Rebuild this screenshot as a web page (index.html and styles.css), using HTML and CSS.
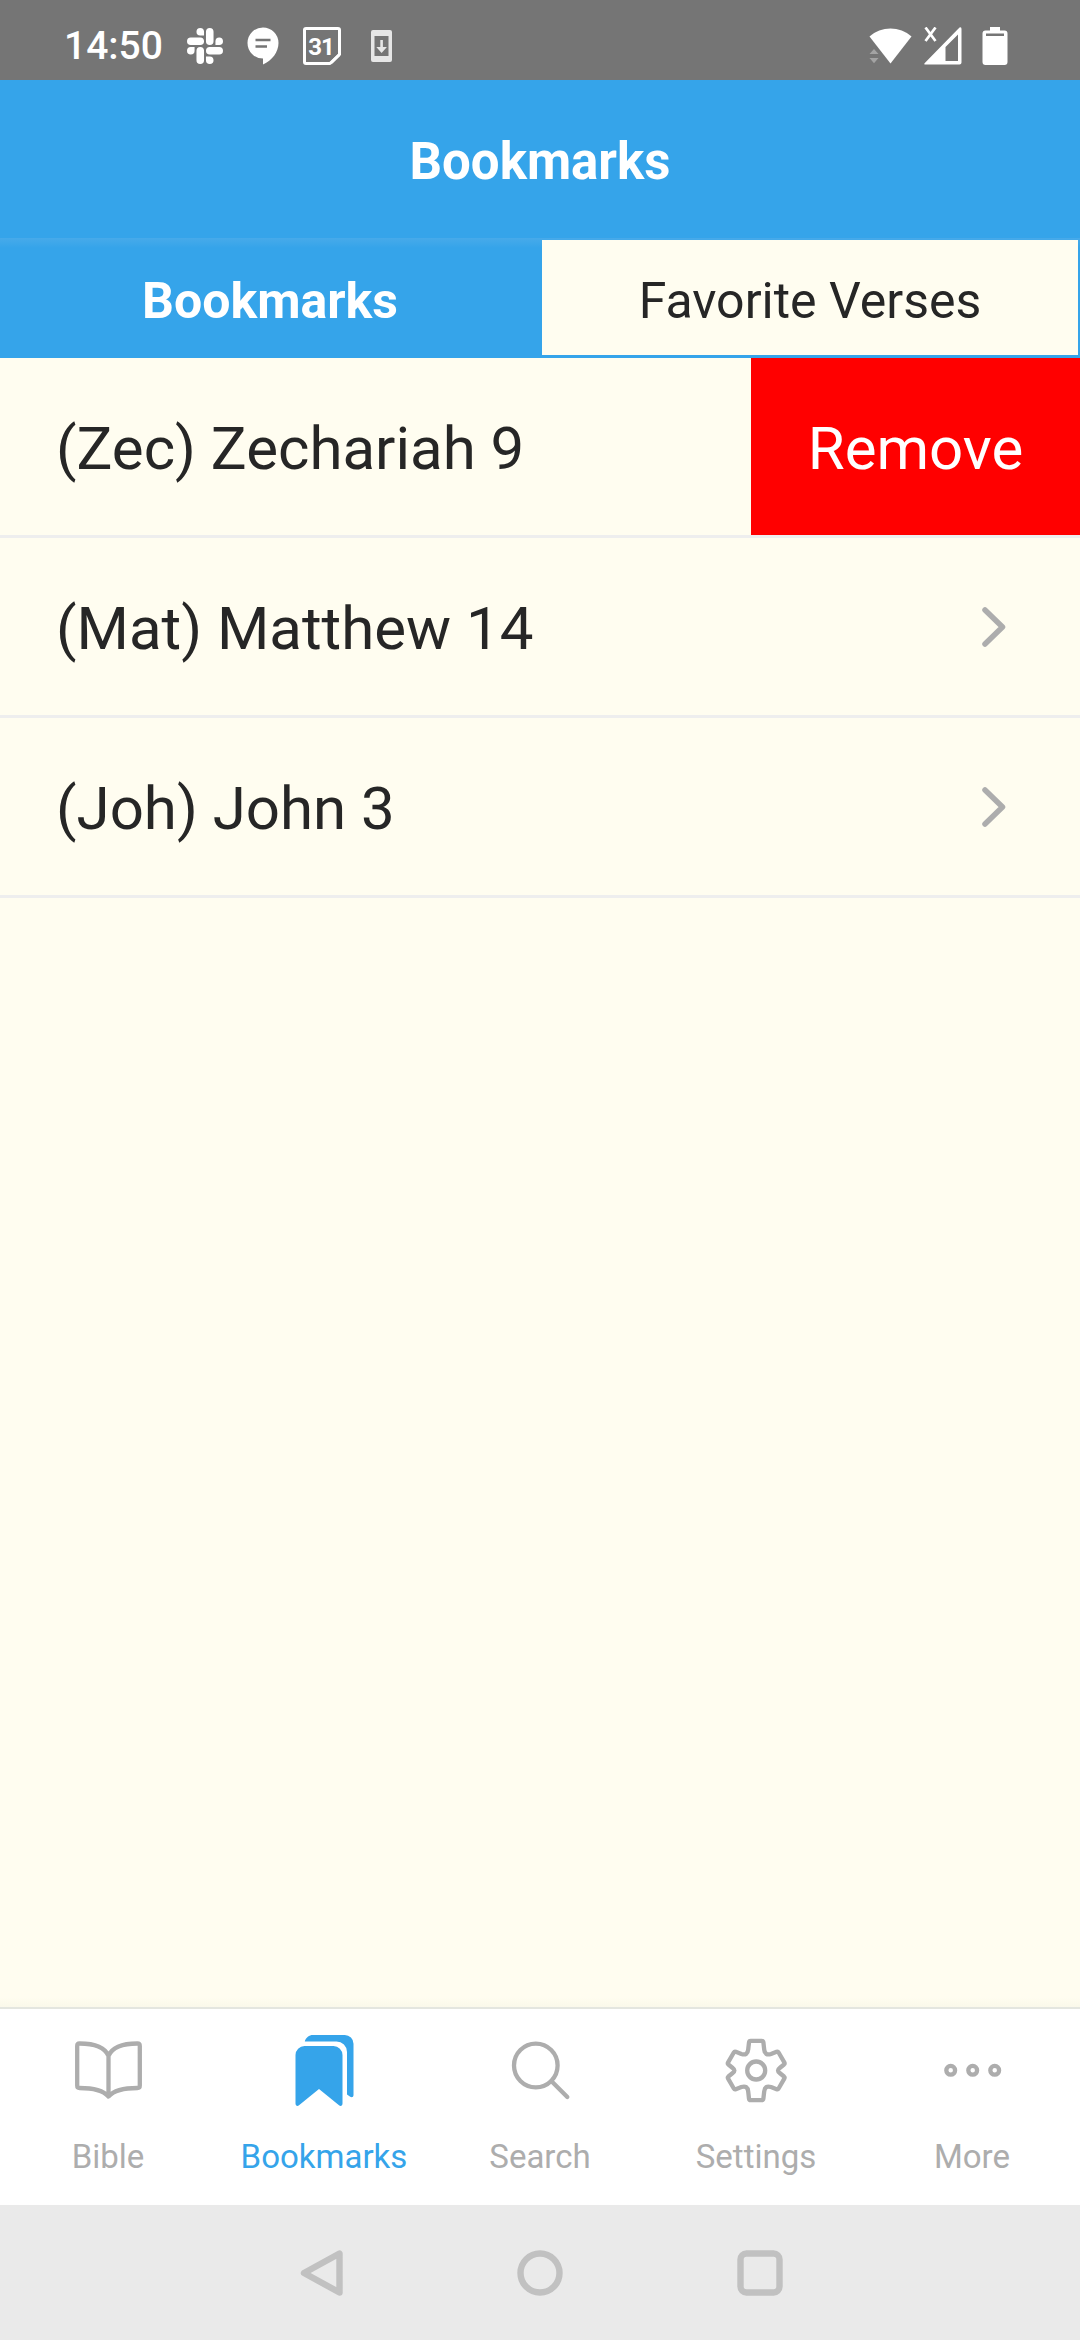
FILE: index.html
```html
<!DOCTYPE html>
<html lang="en">
<head>
  <meta charset="UTF-8">
  <meta name="viewport" content="width=device-width, initial-scale=1.0">
  <title>Bookmarks</title>
  <link rel="stylesheet" href="styles.css">
</head>
<body>
  <div class="status-bar">
    <span class="time">14:50</span>
    <svg class="slack" viewBox="0 0 24 24" width="36" height="36" fill="#fff"><path d="M5.042 15.165a2.528 2.528 0 0 1-2.52 2.523A2.528 2.528 0 0 1 0 15.165a2.527 2.527 0 0 1 2.522-2.52h2.52v2.52zM6.313 15.165a2.527 2.527 0 0 1 2.521-2.52 2.527 2.527 0 0 1 2.521 2.52v6.313A2.528 2.528 0 0 1 8.834 24a2.528 2.528 0 0 1-2.521-2.522v-6.313zM8.834 5.042a2.528 2.528 0 0 1-2.521-2.52A2.528 2.528 0 0 1 8.834 0a2.528 2.528 0 0 1 2.521 2.522v2.52H8.834zM8.834 6.313a2.528 2.528 0 0 1 2.521 2.521 2.528 2.528 0 0 1-2.521 2.521H2.522A2.528 2.528 0 0 1 0 8.834a2.528 2.528 0 0 1 2.522-2.521h6.312zM18.956 8.834a2.528 2.528 0 0 1 2.522-2.521A2.528 2.528 0 0 1 24 8.834a2.528 2.528 0 0 1-2.522 2.521h-2.522V8.834zM17.688 8.834a2.528 2.528 0 0 1-2.523 2.521 2.527 2.527 0 0 1-2.520-2.521V2.522A2.527 2.527 0 0 1 15.165 0a2.528 2.528 0 0 1 2.523 2.522v6.312zM15.165 18.956a2.528 2.528 0 0 1 2.523 2.522A2.528 2.528 0 0 1 15.165 24a2.527 2.527 0 0 1-2.520-2.522v-2.522h2.520zM15.165 17.688a2.527 2.527 0 0 1-2.520-2.523 2.526 2.526 0 0 1 2.520-2.520h6.313A2.527 2.527 0 0 1 24 15.165a2.528 2.528 0 0 1-2.522 2.523h-6.313z"/></svg>
    <svg class="chat" width="32" height="38" viewBox="0 0 32 38">
      <path fill="#fff" d="M16 .5a15.5 15.5 0 0 1 15.5 15.5C31.500 25 25 33.500 16 37.500V31.500A15.500 15.500 0 0 1 16 .5z"/>
      <path stroke="#757575" stroke-width="2.600" d="M8.500 13h15M8.500 19.500h11.500"/>
    </svg>
    <svg class="calendar" width="40" height="40" viewBox="0 0 40 40">
      <path fill="none" stroke="#fff" stroke-width="3" stroke-linejoin="round" d="M4 2.500h32a1.500 1.500 0 0 1 1.500 1.500v24.500L28 37.500H4A1.500 1.500 0 0 1 2.500 36V4A1.500 1.500 0 0 1 4 2.500z"/>
      <path fill="#fff" d="M26.500 37.500L37.500 26.500v4l-7 7z"/>
      <text class="calendar-day" x="19" y="28.500" text-anchor="middle">31</text>
    </svg>
    <svg class="update" width="21" height="32" viewBox="0 0 21 32">
      <path fill="#e6e6e6" fill-rule="evenodd" d="M2 0h17a2 2 0 0 1 2 2v28a2 2 0 0 1-2 2H2a2 2 0 0 1-2-2V2a2 2 0 0 1 2-2zM3.500 6v20h14V6z"/>
      <path fill="#e6e6e6" d="M9.300 10h2.600v7h4l-5.300 6-5.300-6h4z"/>
    </svg>
    <svg class="wifi" width="43" height="36" viewBox="0 0 43 36">
      <path fill="#fff" d="M.5 8.500C12-2.300 31-2.300 42.500 8.500L21.500 35.500z"/>
      <path fill="#a3a3a3" d="M.5 26l4.500-5 4.500 5zM.5 30l4.500 5.200 4.500-5.200z"/>
    </svg>
    <svg class="signal" width="38" height="38" viewBox="0 0 38 38">
      <path fill="#fff" fill-rule="evenodd" d="M35.500.6Q37.500-.5 37.500 2v33.500q0 2-2 2H1.500Q-.5 37.500.8 36zM34 7.500L21.500 20v14H34z"/>
      <path stroke="#fff" stroke-width="2.700" d="M1.500.5l10 13.500M11.500.5l-10 13.500"/>
    </svg>
    <svg class="battery" width="26" height="38" viewBox="0 0 26 38">
      <path fill="#fff" d="M8 0h10v3.500h4.500a3 3 0 0 1 3 3V35a3 3 0 0 1-3 3h-19a3 3 0 0 1-3-3V6.500a3 3 0 0 1 3-3H8z"/>
      <path fill="#757575" d="M4 6.500h18V9H4z"/>
    </svg>
  </div>

  <header class="header">Bookmarks</header>

  <div class="tabs">
    <div class="tab active">Bookmarks</div>
    <div class="tab">Favorite Verses</div>
  </div>

  <ul class="list">
    <li class="item swiped">
      <span class="verse">(Zec) Zechariah 9</span>
      <button class="remove">Remove</button>
    </li>
    <li class="item">
      <span class="verse">(Mat) Matthew 14</span>
      <svg class="chevron" width="26" height="42" viewBox="0 0 26 42"><path d="M4 4l17.500 17L4 38"/></svg>
    </li>
    <li class="item">
      <span class="verse">(Joh) John 3</span>
      <svg class="chevron" width="26" height="42" viewBox="0 0 26 42"><path d="M4 4l17.500 17L4 38"/></svg>
    </li>
  </ul>

  <nav class="tab-bar">
    <a class="nav-item">
      <svg class="icon" width="80" height="80" viewBox="0 0 80 80">
        <path d="M40.500 26C36 15 22 13.500 11.500 13.500Q9.200 13.500 9.200 16V55.500Q9.200 58 11.500 58C22 58 34 59 40.500 66.500C47 59 59 58 69.500 58Q71.800 58 71.800 55.500V16Q71.800 13.500 69.500 13.500C59 13.500 45 15 40.500 26zV65"/>
      </svg>
      Bible
    </a>
    <a class="nav-item current">
      <svg class="icon solid" width="80" height="80" viewBox="7.8 0 80 80">
        <path d="M19.300 25a9 9 0 0 1 9-9h29a9 9 0 0 1 9 9v48.500c0 2.500-2 3-3.500 1.800L42.800 59 22.800 75.300c-1.500 1.200-3.500.7-3.500-1.800z"/>
        <path d="M28.600 11.500c1-4 4.500-6.500 8-6.500h32a8.700 8.700 0 0 1 8.700 8.700V65c0 2.500-2 2.500-3.300 1.700l-3.200-2.200V22a10.500 10.500 0 0 0-10.500-10.500z"/>
      </svg>
      Bookmarks
    </a>
    <a class="nav-item">
      <svg class="icon" width="80" height="80" viewBox="0 0 80 80">
        <circle cx="35.800" cy="35.500" r="21.800"/><path d="M51.300 51l16 16"/>
      </svg>
      Search
    </a>
    <a class="nav-item">
      <svg class="icon" width="80" height="80" viewBox="0 0 80 80">
        <circle cx="40.200" cy="40.500" r="9"/>
        <path d="M34.700 10.900h11q1.500 0 1.700 1.500l.8 7.100q.7 6.500 6.800 4.500l5.600-2.200q1.300-.5 2 .7l5.700 9.900q.7 1.200-.3 2.100l-4.300 3.500q-3.400 2.500 0 5l4.300 3.500q1 .9.300 2.100l-5.700 9.900q-.7 1.200-2 .7L55 57q-6.100-2-6.800 4.500l-.8 7.100q-.2 1.500-1.700 1.500h-11q-1.500 0-1.700-1.500l-.8-7.100q-.7-6.500-6.800-4.500l-5.600 2.200q-1.300.5-2-.7l-5.700-9.900q-.7-1.200.3-2.100l4.300-3.500q3.400-2.500 0-5l-4.300-3.500q-1-.9-.3-2.100l5.700-9.900q.7-1.200 2-.7l5.600 2.200q6.100 2 6.800-4.500l.8-7.100q.2-1.500 1.700-1.500z"/>
      </svg>
      Settings
    </a>
    <a class="nav-item">
      <svg class="icon" width="80" height="80" viewBox="0 0 80 80">
        <circle cx="18.700" cy="40.300" r="4.400"/><circle cx="40.700" cy="40.300" r="4.400"/><circle cx="62.700" cy="40.300" r="4.400"/>
      </svg>
      More
    </a>
  </nav>

  <div class="system-nav">
    <svg width="48" height="48" viewBox="0 0 48 48"><path d="M43.500 4.500v39L8 24z"/></svg>
    <svg width="48" height="48" viewBox="0 0 48 48"><circle cx="24" cy="24" r="19.500"/></svg>
    <svg width="48" height="48" viewBox="0 0 48 48"><rect x="4.500" y="4.500" width="39" height="39" rx="6"/></svg>
  </div>
</body>
</html>
```
FILE: styles.css
```css
* { box-sizing: border-box; }
body {
  margin: 0;
  width: 1080px;
  height: 2340px;
  display: flex;
  flex-direction: column;
  font-family: Roboto, sans-serif;
  background: #fffdf0;
  color: #262626;
}
svg { display: block; flex: none; }

.status-bar {
  height: 80px;
  padding: 12px 72px 0 64px;
  display: flex;
  align-items: center;
  background: #757575;
}
.time { width: 123px; color: #fff; font-size: 39px; font-weight: 500; }
.chat { margin-left: 24px; }
.calendar { margin-left: 23px; }
.calendar-day { font: 700 24px Roboto, sans-serif; letter-spacing: -1px; fill: #fff; }
.update { margin-left: 29px; }
.wifi { margin-left: auto; }
.signal { margin-left: 12px; }
.battery { margin-left: 20px; }

.header {
  height: 158px;
  background: #35a4ea;
  color: #fff;
  font-size: 51px;
  font-weight: 700;
  line-height: 163px;
  text-align: center;
}

.tabs {
  height: 120px;
  display: flex;
  background: linear-gradient(#47aaea, #35a4ea 10px);
  font-size: 50px;
}
.tab {
  flex: 1;
  margin: 2px 2px 3px;
  line-height: 122px;
  text-align: center;
  background: #fffdf0;
}
.tab.active { background: none; color: #fff; font-weight: 700; }

.list {
  flex: 1;
  margin: 0;
  padding: 0;
  list-style: none;
  background: linear-gradient(to top, #faf8ea, #fffdf0 10px);
}
.item {
  height: 180px;
  padding: 0 73px 0 56px;
  display: flex;
  justify-content: space-between;
  align-items: center;
  border-bottom: 3px solid #eee;
  font-size: 60px;
}
.item.swiped { padding-right: 0; }
.verse { padding-top: 4px; }
.remove {
  width: 329px;
  height: 177px;
  padding: 4px 0 0;
  border: 0;
  background: #f00;
  color: #fff;
  font: inherit;
}
.chevron { fill: none; stroke: #adadad; stroke-width: 5.5; stroke-linecap: round; stroke-linejoin: round; }

.tab-bar {
  height: 198px;
  display: flex;
  border-top: 2px solid #e4e6e0;
  background: #fff;
}
.nav-item {
  flex: 1;
  padding-top: 21px;
  display: flex;
  flex-direction: column;
  align-items: center;
  color: #adadad;
  font-size: 33px;
  line-height: 93px;
}
.nav-item.current { color: #35a4ea; }
.icon { fill: none; stroke: currentColor; stroke-width: 4.3; stroke-linecap: round; stroke-linejoin: round; }
.icon.solid { fill: currentColor; stroke: none; }

.system-nav {
  height: 135px;
  display: flex;
  justify-content: center;
  align-items: center;
  gap: 172px;
  background: #eaeaea;
}
.system-nav svg { fill: none; stroke: #c1c1c1; stroke-width: 6.4; stroke-linejoin: round; }
```
